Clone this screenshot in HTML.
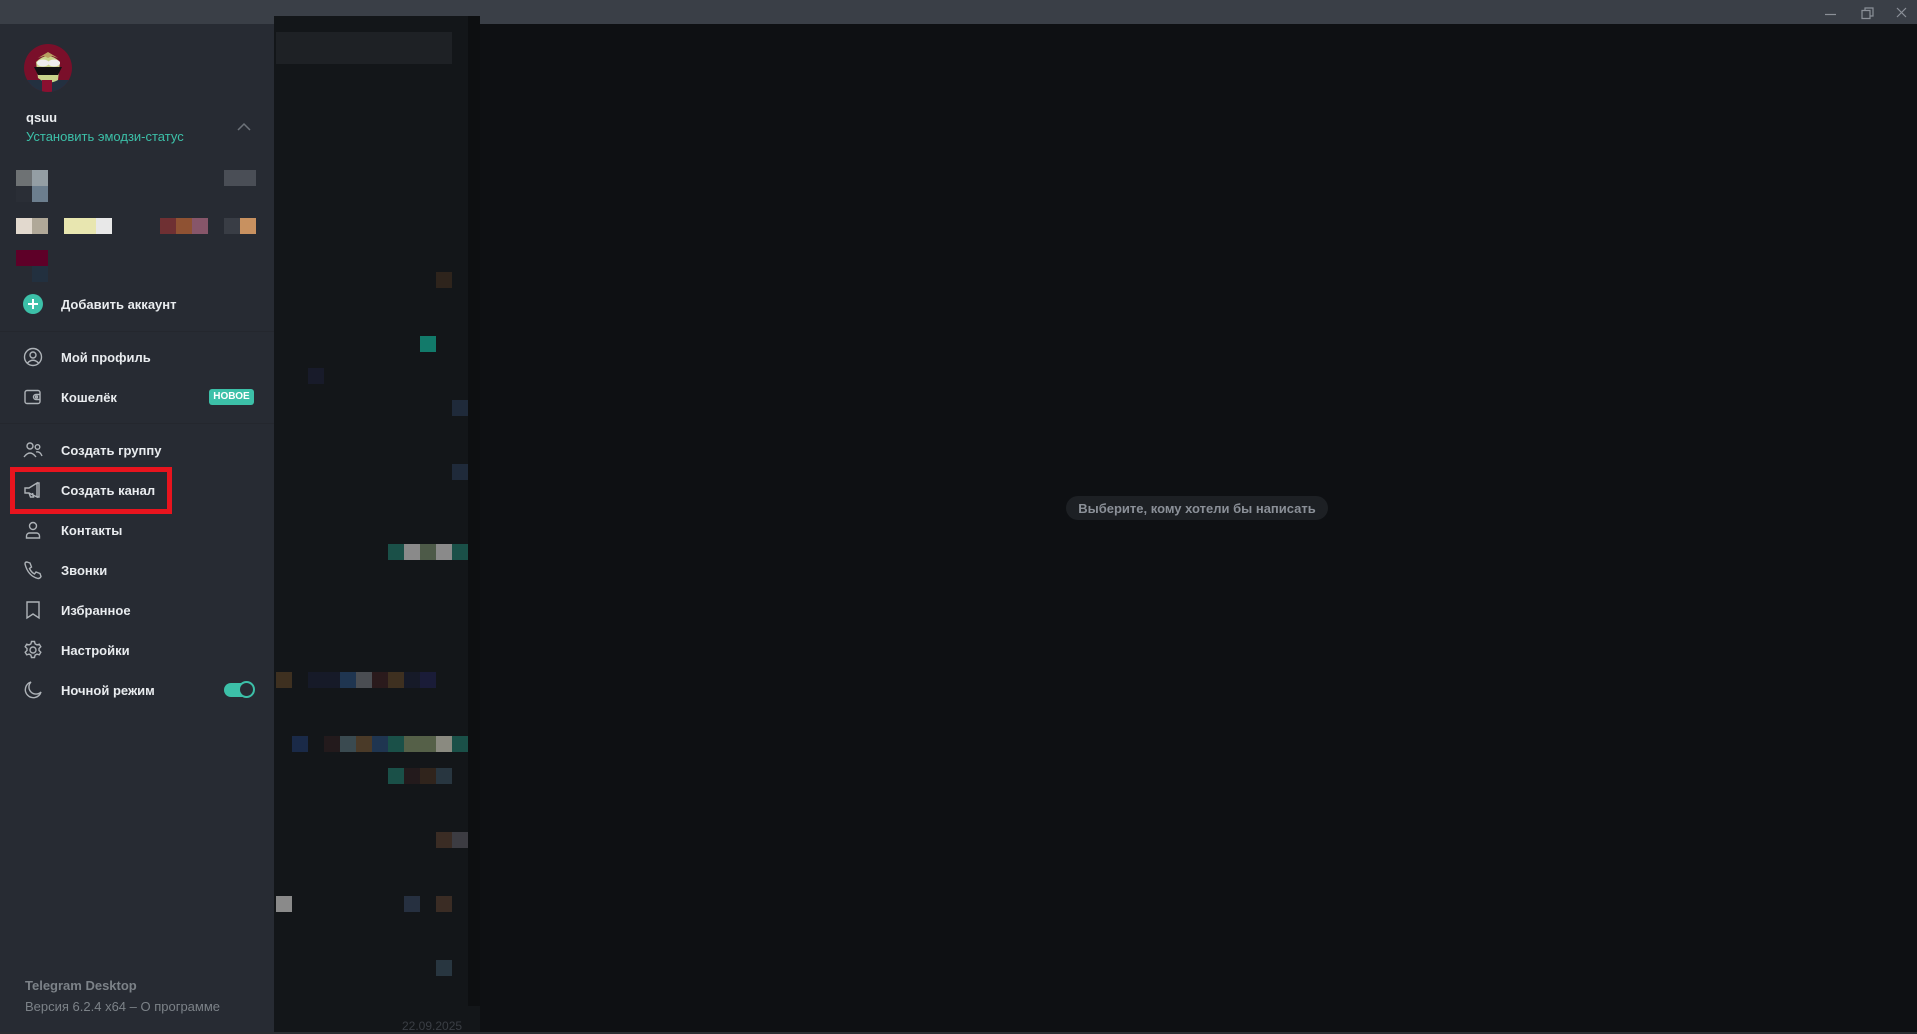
<!DOCTYPE html>
<html><head><meta charset="utf-8"><style>
*{margin:0;padding:0;box-sizing:border-box}
body{width:1917px;height:1034px;overflow:hidden;background:#0e1013;font-family:"Liberation Sans","Noto Sans CJK SC",sans-serif;position:relative}
.abs{position:absolute}
.tb{left:0;top:0;width:1917px;height:24px;background:#3a3f47}
.list{left:274px;top:16px;width:206px;height:1018px;background:#131619}
.sb{left:0;top:24px;width:274px;height:1010px;background:#272b33}
.b{position:absolute;width:16px;height:16px}
.item{position:absolute;left:61px;font-size:13px;font-weight:bold;color:#e9ecef;line-height:16px}
.ic{position:absolute;left:23px;width:20px;height:20px}
.sep{position:absolute;left:0;width:274px;height:1px;background:#24272e}
</style></head><body>
<div class="abs tb"></div>
<svg class="abs" style="left:1822px;top:6px" width="95" height="14" viewBox="0 0 95 14"><g stroke="#8b9098" stroke-width="1.2" fill="none"><path d="M3 8.5h11"/><path d="M40 4.5h8v8h-8z M43 4.5v-2.5h8v8h-3"/><path d="M75 2l9 9M84 2l-9 9"/></g></svg>
<div class="abs list"></div>
<div class="abs" style="left:276px;top:32px;width:176px;height:32px;background:#1e2125"></div>
<div class="abs" style="left:468px;top:16px;width:12px;height:990px;background:#0d0f11"></div>
<div class="abs" style="left:402px;top:1019px;font-size:12px;color:#3a3e44">22.09.2025</div>
<div class="b" style="left:436px;top:272px;background:#2e241c"></div>
<div class="b" style="left:420px;top:336px;background:#127a6a"></div>
<div class="b" style="left:308px;top:368px;background:#181b2a"></div>
<div class="b" style="left:452px;top:400px;background:#1f2a3a"></div>
<div class="b" style="left:452px;top:464px;background:#1f2a3a"></div>
<div class="b" style="left:388px;top:544px;background:#1a5048"></div><div class="b" style="left:404px;top:544px;background:#8a8a8a"></div><div class="b" style="left:420px;top:544px;background:#4d5a48"></div><div class="b" style="left:436px;top:544px;background:#8a8a8a"></div><div class="b" style="left:452px;top:544px;background:#1a5048"></div>
<div class="b" style="left:276px;top:672px;background:#3e3020"></div><div class="b" style="left:308px;top:672px;width:32px;background:#161a28"></div><div class="b" style="left:340px;top:672px;background:#1f3550"></div><div class="b" style="left:356px;top:672px;background:#4a4d52"></div><div class="b" style="left:372px;top:672px;background:#2a1a1c"></div><div class="b" style="left:388px;top:672px;background:#3e3020"></div><div class="b" style="left:404px;top:672px;background:#161a28"></div><div class="b" style="left:420px;top:672px;background:#1a1c38"></div>
<div class="b" style="left:292px;top:736px;background:#1a2a48"></div><div class="b" style="left:324px;top:736px;background:#231a1c"></div><div class="b" style="left:340px;top:736px;background:#3a4a50"></div><div class="b" style="left:356px;top:736px;background:#4a3a28"></div><div class="b" style="left:372px;top:736px;background:#1f3550"></div><div class="b" style="left:388px;top:736px;background:#1a5048"></div><div class="b" style="left:404px;top:736px;width:32px;background:#556048"></div><div class="b" style="left:436px;top:736px;background:#8a8a80"></div><div class="b" style="left:452px;top:736px;background:#1a5048"></div>
<div class="b" style="left:388px;top:768px;background:#1a5048"></div><div class="b" style="left:404px;top:768px;background:#231a1c"></div><div class="b" style="left:420px;top:768px;background:#30241c"></div><div class="b" style="left:436px;top:768px;background:#283640"></div>
<div class="b" style="left:436px;top:832px;background:#3a2c24"></div><div class="b" style="left:452px;top:832px;background:#3c3c42"></div>
<div class="b" style="left:276px;top:896px;background:#8a8a8a"></div><div class="b" style="left:404px;top:896px;background:#263040"></div><div class="b" style="left:436px;top:896px;background:#3a2c24"></div>
<div class="b" style="left:436px;top:960px;background:#283640"></div>
<div class="abs" style="left:1066px;top:496px;width:262px;height:24px;border-radius:12px;background:#1d2024;color:#8b9098;font-size:13px;font-weight:bold;line-height:25px;text-align:center">Выберите, кому хотели бы написать</div>
<div class="abs sb"></div>
<svg class="abs" style="left:24px;top:44px" width="48" height="48" viewBox="0 0 48 48"><defs><clipPath id="c"><circle cx="24" cy="24" r="24"/></clipPath></defs><g clip-path="url(#c)"><rect width="48" height="48" fill="#7a0f2a"/><path d="M0 36 L48 36 L48 48 L0 48z" fill="#233040"/><path d="M12 18 Q24 6 36 18 L34 36 Q24 42 14 34z" fill="#c9d48a"/><path d="M14 14 L24 8 L34 14 L28 12 L24 14 L20 12z" fill="#b8a060"/><path d="M10 23 L38 23 L34 31 L14 31z" fill="#111"/><ellipse cx="19" cy="19" rx="6" ry="3.5" fill="#eee"/><ellipse cx="30" cy="19" rx="6" ry="3.5" fill="#eee"/><rect x="18" y="36" width="10" height="12" fill="#8a1030"/></g></svg>
<div class="abs" style="left:26px;top:110px;font-size:13px;font-weight:bold;color:#e9ecef">qsuu</div>
<div class="abs" style="left:26px;top:129px;font-size:13px;color:#3cc0a8">Установить эмодзи-статус</div>
<svg class="abs" style="left:236px;top:122px" width="16" height="10" viewBox="0 0 16 10"><path d="M2 8l6-6 6 6" stroke="#6d737a" stroke-width="1.5" fill="none"/></svg>
<div class="b" style="left:16px;top:170px;background:#6e7274"></div><div class="b" style="left:32px;top:170px;background:#949ea4"></div><div class="b" style="left:16px;top:186px;background:#2a2e36"></div><div class="b" style="left:32px;top:186px;background:#6c7e8e"></div>
<div class="b" style="left:224px;top:170px;width:32px;background:#4a4e56"></div>
<div class="b" style="left:16px;top:218px;background:#e2d9ce"></div><div class="b" style="left:32px;top:218px;background:#b0a898"></div><div class="b" style="left:64px;top:218px;width:32px;background:#e8e6b0"></div><div class="b" style="left:96px;top:218px;background:#e8e8e8"></div><div class="b" style="left:160px;top:218px;background:#6f3033"></div><div class="b" style="left:176px;top:218px;background:#8f5233"></div><div class="b" style="left:192px;top:218px;background:#87566a"></div><div class="b" style="left:224px;top:218px;background:#393d45"></div><div class="b" style="left:240px;top:218px;background:#c89160"></div>
<div class="b" style="left:16px;top:250px;width:32px;background:#5e0028"></div><div class="b" style="left:32px;top:266px;background:#22303f"></div>
<svg class="abs" style="left:23px;top:294px" width="20" height="20" viewBox="0 0 20 20"><circle cx="10" cy="10" r="10" fill="#3cc0a8"/><path d="M10 5v10M5 10h10" stroke="#fff" stroke-width="2"/></svg>
<div class="item" style="top:297px">Добавить аккаунт</div>
<div class="sep" style="top:331px"></div>
<svg class="ic" style="top:347px" viewBox="0 0 20 20" fill="none" stroke="#aeb3b8" stroke-width="1.4"><circle cx="10" cy="10" r="8.5"/><circle cx="10" cy="8" r="3"/><path d="M4.5 16 Q10 10.5 15.5 16"/></svg>
<div class="item" style="top:350px">Мой профиль</div>
<svg class="ic" style="top:387px" viewBox="0 0 20 20" fill="none" stroke="#aeb3b8" stroke-width="1.4"><rect x="2" y="3.5" width="15" height="13" rx="2"/><path d="M17 7.5h-4a2.5 2.5 0 0 0 0 5h4"/><circle cx="13.5" cy="10" r="1"/></svg>
<div class="item" style="top:390px">Кошелёк</div>
<div class="abs" style="left:209px;top:389px;width:45px;height:16px;border-radius:3px;background:#3cc0a8;color:#fff;font-size:10px;font-weight:bold;line-height:16px;text-align:center">НОВОЕ</div>
<div class="sep" style="top:423px"></div>
<svg class="ic" style="top:440px" viewBox="0 0 20 20" fill="none" stroke="#aeb3b8" stroke-width="1.4"><circle cx="7" cy="6" r="3"/><circle cx="14.5" cy="7" r="2.3"/><path d="M1 17 Q7 9 13 17M13 12 Q17 11 19 16"/></svg>
<div class="item" style="top:443px">Создать группу</div>
<svg class="ic" style="top:480px" viewBox="0 0 20 20" fill="none" stroke="#aeb3b8" stroke-width="1.4"><path d="M2 8h4l8-5v14l-8-4H2z"/><path d="M6 13l1.5 4h3l-1-4"/><path d="M14 3h2v14h-2"/></svg>
<div class="item" style="top:483px">Создать канал</div>
<div class="abs" style="left:10px;top:467px;width:162px;height:47px;border:5px solid #e8141e"></div>
<svg class="ic" style="top:520px" viewBox="0 0 20 20" fill="none" stroke="#aeb3b8" stroke-width="1.4"><circle cx="10" cy="6" r="3.5"/><path d="M3.5 18v-2a3 3 0 0 1 3-3h7a3 3 0 0 1 3 3v2z"/></svg>
<div class="item" style="top:523px">Контакты</div>
<svg class="ic" style="top:560px" viewBox="0 0 20 20" fill="none" stroke="#aeb3b8" stroke-width="1.4"><path d="M4 2l3 1 1.5 4-2 1.5q2 4 5 5.5l1.5-2 4 1.5 1 3q-1 2-3 2Q5 16 2 4q0-2 2-2z"/></svg>
<div class="item" style="top:563px">Звонки</div>
<svg class="ic" style="top:600px" viewBox="0 0 20 20" fill="none" stroke="#aeb3b8" stroke-width="1.4"><path d="M4 2h12v16l-6-4-6 4z"/></svg>
<div class="item" style="top:603px">Избранное</div>
<svg class="ic" style="top:640px" viewBox="0 0 20 20" fill="none" stroke="#aeb3b8" stroke-width="1.4"><circle cx="10" cy="10" r="3"/><path d="M8.5 1.5h3l.6 2.4 1.8 1 2.4-.7 1.5 2.6-1.8 1.7v2l1.8 1.7-1.5 2.6-2.4-.7-1.8 1-.6 2.4h-3l-.6-2.4-1.8-1-2.4.7-1.5-2.6 1.8-1.7v-2L2.2 6.8l1.5-2.6 2.4.7 1.8-1z"/></svg>
<div class="item" style="top:643px">Настройки</div>
<svg class="ic" style="top:680px" viewBox="0 0 20 20" fill="none" stroke="#aeb3b8" stroke-width="1.4"><path d="M8 2a8 8 0 1 0 10 10A7 7 0 0 1 8 2z"/></svg>
<div class="item" style="top:683px">Ночной режим</div>
<div class="abs" style="left:224px;top:683px;width:30px;height:14px;border-radius:7px;background:#3cc0a8"></div>
<div class="abs" style="left:238px;top:681px;width:17px;height:17px;border-radius:50%;background:#272b33;border:2.5px solid #3cc0a8"></div>
<div class="abs" style="left:25px;top:978px;font-size:13px;font-weight:bold;color:#7c8288">Telegram Desktop</div>
<div class="abs" style="left:25px;top:999px;font-size:13px;color:#7c8288">Версия 6.2.4 x64 – О программе</div>
<div class="abs" style="left:0;top:1032px;width:1917px;height:2px;background:#2a2d31"></div>
</body></html>
